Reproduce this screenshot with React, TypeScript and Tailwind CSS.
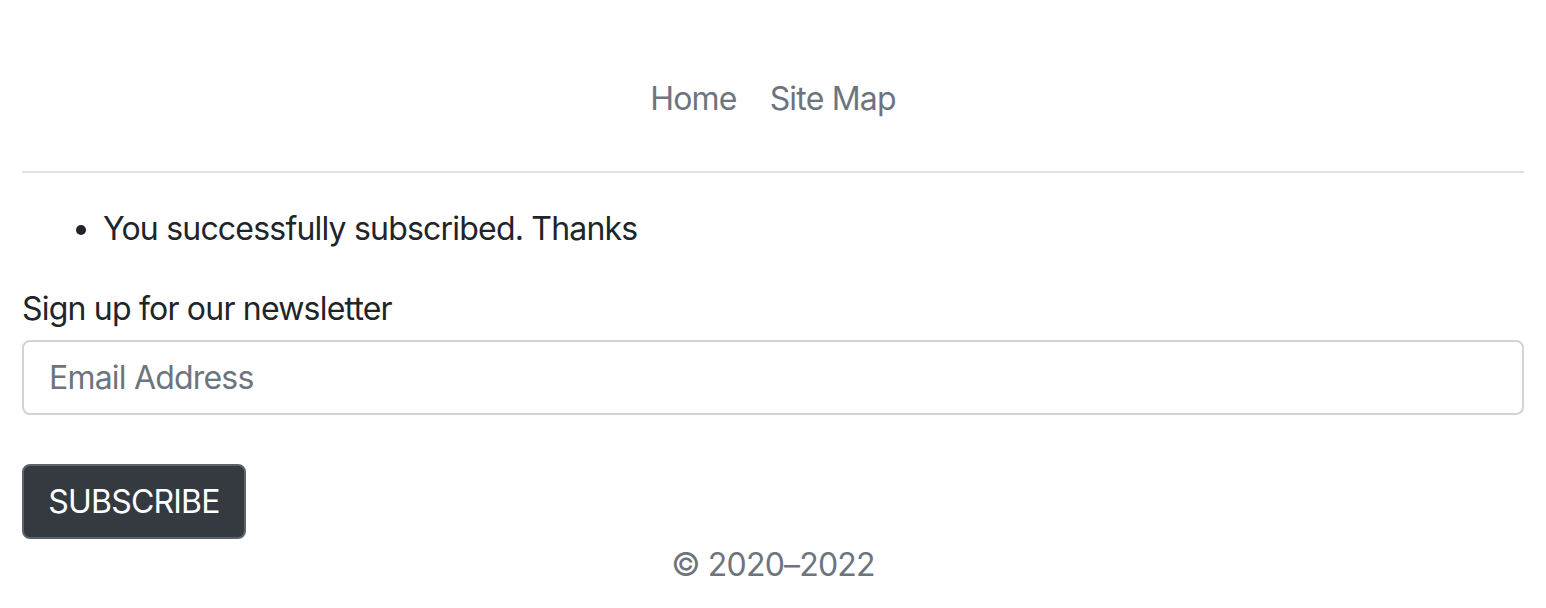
export default function App() {
  return (
    <div
      className="bg-white text-[#212529] text-[32px] leading-[48px] tracking-[-0.8px] px-[22px] pt-[59px]"
      style={{ fontFamily: "Inter, 'Noto Sans', sans-serif" }}
    >
      {/* footer nav */}
      <ul className="flex justify-center gap-[33px] border-b-2 border-[#dee2e6] pb-[32px] mb-[32px]">
        <li>
          <a href="#" className="block py-[16px] text-[#6c757d]">
            Home
          </a>
        </li>
        <li>
          <a href="#" className="block py-[16px] text-[#6c757d]">
            Site Map
          </a>
        </li>
      </ul>

      <ul className="list-disc pl-[81px] mb-[32px]">
        <li>You successfully subscribed. Thanks</li>
      </ul>

      <form className="flex flex-col">
        <label htmlFor="email" className="block mb-[7px]">
          Sign up for our newsletter
        </label>
        <input
          id="email"
          type="email"
          placeholder="Email Address"
          className="w-full h-[75px] border-2 border-[#ced4da] rounded-[8px] px-[25px] text-[32px] tracking-[-0.8px] placeholder:text-[#6c757d] outline-none"
        />
        <div className="mt-[49px]">
          <button
            type="button"
            className="h-[75px] w-[224px] bg-[#343a40] border-2 border-[#5c636a] rounded-[8px] text-white text-[32px] tracking-[-0.8px] uppercase"
          >
            Subscribe
          </button>
        </div>
      </form>

      <p className="text-center text-[#6c757d] pt-[2px] pb-[17px]">© 2020–2022</p>
    </div>
  );
}
